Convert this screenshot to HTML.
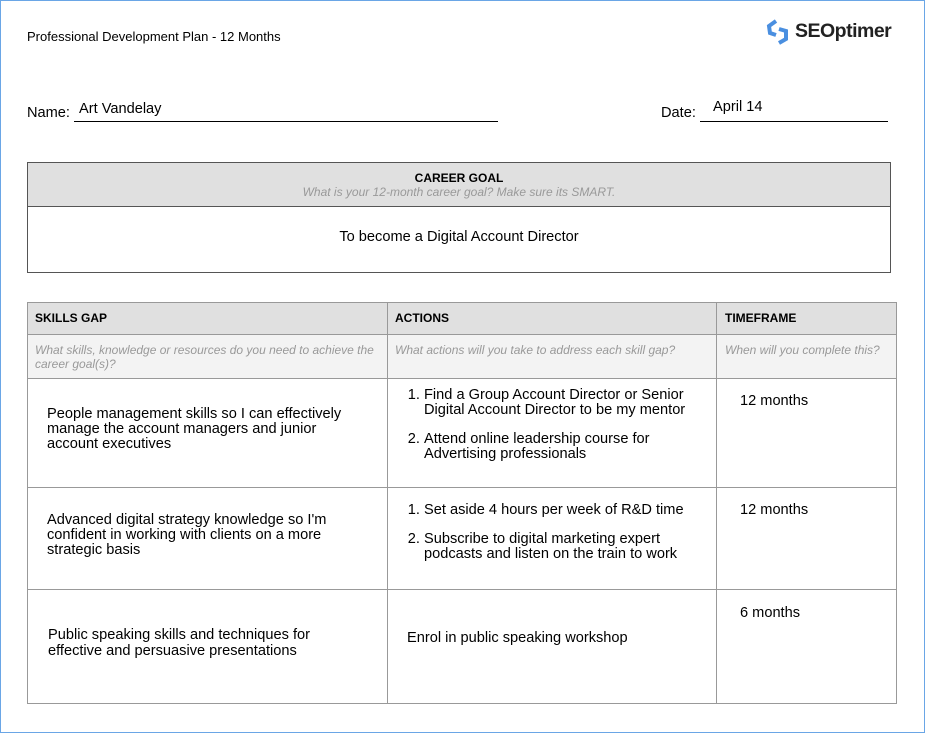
<!DOCTYPE html>
<html><head><style>
body{margin:0;width:925px;height:733px;background:#fff;font-family:"Liberation Sans",Arial,sans-serif;position:relative;overflow:hidden}
.frame{position:absolute;left:0;top:0;width:923px;height:731px;border:1px solid #6aa6e6}
.a{position:absolute}
.t{font-size:14.6px;color:#000;line-height:15px}
.h{font-size:12px;font-weight:bold}
.i{font-size:12px;font-style:italic;color:#999;line-height:14px}
.l{position:absolute;background:#999}
ol{margin:0;padding-left:36px;font-size:14.6px;line-height:15px}
ol li{margin-bottom:14px}
</style></head><body>
<div class="frame"></div>
<div class="a" style="left:27px;top:29px;font-size:13px">Professional Development Plan - 12 Months</div>
<svg class="a" style="left:764px;top:17px" width="28" height="30" viewBox="0 0 28 30"><g fill="none" stroke="#4a8fe0" stroke-width="4"><path d="M12 4 L5 9 L6 16 L12 18"/><path d="M15 12 L22 14 L22 22 L15 26"/></g></svg>
<div class="a" style="left:795px;top:20px;font-size:19.5px;font-weight:bold;color:#222;letter-spacing:-0.5px">SEOptimer</div>
<div class="a t" style="left:27px;top:106px">Name:</div>
<div class="a t" style="left:79px;top:102px">Art Vandelay</div>
<div class="a" style="left:74px;top:121px;width:424px;height:1px;background:#000"></div>
<div class="a t" style="left:661px;top:106px">Date:</div>
<div class="a t" style="left:713px;top:100px">April 14</div>
<div class="a" style="left:700px;top:121px;width:188px;height:1px;background:#000"></div>

<div class="a" style="left:27px;top:162px;width:862px;height:109px;border:1px solid #555"></div>
<div class="a" style="left:28px;top:163px;width:862px;height:43px;background:#e0e0e0;border-bottom:1px solid #555"></div>
<div class="a h" style="left:28px;top:171px;width:862px;text-align:center">CAREER GOAL</div>
<div class="a i" style="left:28px;top:185px;width:862px;text-align:center">What is your 12-month career goal? Make sure its SMART.</div>
<div class="a t" style="left:28px;top:230px;width:862px;text-align:center">To become a Digital Account Director</div>

<div class="a" style="left:27px;top:302px;width:870px;height:32px;background:#e0e0e0"></div>
<div class="a" style="left:27px;top:334px;width:870px;height:44px;background:#f3f3f3"></div>
<div class="l" style="left:27px;top:302px;width:870px;height:1px"></div>
<div class="l" style="left:27px;top:334px;width:870px;height:1px"></div>
<div class="l" style="left:27px;top:378px;width:870px;height:1px"></div>
<div class="l" style="left:27px;top:487px;width:870px;height:1px"></div>
<div class="l" style="left:27px;top:589px;width:870px;height:1px"></div>
<div class="l" style="left:27px;top:703px;width:870px;height:1px"></div>
<div class="l" style="left:27px;top:302px;width:1px;height:402px"></div>
<div class="l" style="left:387px;top:302px;width:1px;height:402px"></div>
<div class="l" style="left:716px;top:302px;width:1px;height:402px"></div>
<div class="l" style="left:896px;top:302px;width:1px;height:402px"></div>

<div class="a h" style="left:35px;top:311px">SKILLS GAP</div>
<div class="a h" style="left:395px;top:311px">ACTIONS</div>
<div class="a h" style="left:725px;top:311px">TIMEFRAME</div>
<div class="a i" style="left:35px;top:343px;width:345px">What skills, knowledge or resources do you need to achieve the career goal(s)?</div>
<div class="a i" style="left:395px;top:343px">What actions will you take to address each skill gap?</div>
<div class="a i" style="left:725px;top:343px">When will you complete this?</div>

<div class="a t" style="left:47px;top:407px;width:320px">People management skills so I can effectively manage the account managers and junior account executives</div>
<div class="a" style="left:388px;top:388px;width:315px"><ol><li>Find a Group Account Director or Senior Digital Account Director to be my mentor</li><li>Attend online leadership course for Advertising professionals</li></ol></div>
<div class="a t" style="left:740px;top:394px">12 months</div>

<div class="a t" style="left:47px;top:513px;width:300px">Advanced digital strategy knowledge so I'm confident in working with clients on a more strategic basis</div>
<div class="a" style="left:388px;top:503px;width:300px"><ol><li>Set aside 4 hours per week of R&amp;D time</li><li>Subscribe to digital marketing expert podcasts and listen on the train to work</li></ol></div>
<div class="a t" style="left:740px;top:503px">12 months</div>

<div class="a t" style="left:48px;top:627px;width:320px;line-height:16px">Public speaking skills and techniques for effective and persuasive presentations</div>
<div class="a t" style="left:407px;top:631px">Enrol in public speaking workshop</div>
<div class="a t" style="left:740px;top:606px">6 months</div>
</body></html>
